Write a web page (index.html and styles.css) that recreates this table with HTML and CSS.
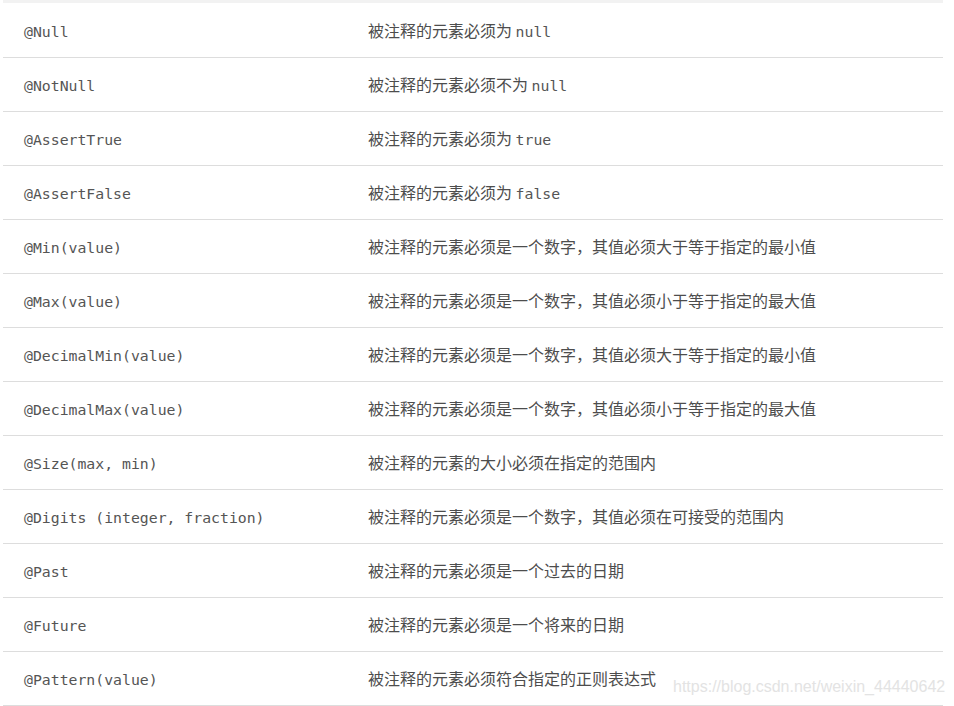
FILE: index.html
```html
<!DOCTYPE html>
<html lang="zh">
<head>
<meta charset="utf-8">
<link rel="stylesheet" href="styles.css">
</head>
<body>
<div class="page">
  <div class="head-band"></div>
  <table class="rules">
    <tbody>
      <tr><td class="name"><code>@Null</code></td><td class="desc">被注释的元素必须为 <code>null</code></td></tr>
      <tr><td class="name"><code>@NotNull</code></td><td class="desc">被注释的元素必须不为 <code>null</code></td></tr>
      <tr><td class="name"><code>@AssertTrue</code></td><td class="desc">被注释的元素必须为 <code>true</code></td></tr>
      <tr><td class="name"><code>@AssertFalse</code></td><td class="desc">被注释的元素必须为 <code>false</code></td></tr>
      <tr><td class="name"><code>@Min(value)</code></td><td class="desc">被注释的元素必须是一个数字，其值必须大于等于指定的最小值</td></tr>
      <tr><td class="name"><code>@Max(value)</code></td><td class="desc">被注释的元素必须是一个数字，其值必须小于等于指定的最大值</td></tr>
      <tr><td class="name"><code>@DecimalMin(value)</code></td><td class="desc">被注释的元素必须是一个数字，其值必须大于等于指定的最小值</td></tr>
      <tr><td class="name"><code>@DecimalMax(value)</code></td><td class="desc">被注释的元素必须是一个数字，其值必须小于等于指定的最大值</td></tr>
      <tr><td class="name"><code>@Size(max, min)</code></td><td class="desc">被注释的元素的大小必须在指定的范围内</td></tr>
      <tr><td class="name"><code>@Digits (integer, fraction)</code></td><td class="desc">被注释的元素必须是一个数字，其值必须在可接受的范围内</td></tr>
      <tr><td class="name"><code>@Past</code></td><td class="desc">被注释的元素必须是一个过去的日期</td></tr>
      <tr><td class="name"><code>@Future</code></td><td class="desc">被注释的元素必须是一个将来的日期</td></tr>
      <tr><td class="name"><code>@Pattern(value)</code></td><td class="desc">被注释的元素必须符合指定的正则表达式</td></tr>
    </tbody>
  </table>
  <div class="watermark">https://blog.csdn.net/weixin_44440642</div>
</div>
</body>
</html>
```

FILE: styles.css
```css
html, body {
  margin: 0;
  padding: 0;
  background: #ffffff;
}

.page {
  position: relative;
  width: 954px;
  height: 706px;
  overflow: hidden;
  padding-left: 3px;
  box-sizing: border-box;
}

.head-band {
  width: 940px;
  height: 3px;
  background: #f2f2f2;
}

.rules {
  width: 940px;
  border-collapse: collapse;
  table-layout: fixed;
}

.rules td {
  height: 53px;
  padding: 0 21px 0 21px;
  box-sizing: border-box;
  border-bottom: 1px solid #dddddd;
  vertical-align: middle;
  color: #4d4d4d;
  font-family: "Noto Sans CJK SC", "Noto Sans", sans-serif;
  font-size: 16px;
  white-space: nowrap;
}

.rules td.name {
  width: 344px;
}

.rules tr {
  height: 54px;
}

code {
  font-family: "DejaVu Sans Mono", "Liberation Mono", monospace;
  font-size: 14.8px;
  color: #555555;
}

.watermark {
  position: absolute;
  left: 673px;
  top: 678px;
  font-family: "Liberation Sans", Arial, sans-serif;
  font-size: 16px;
  color: #e3e3e3;
  white-space: nowrap;
}
```
